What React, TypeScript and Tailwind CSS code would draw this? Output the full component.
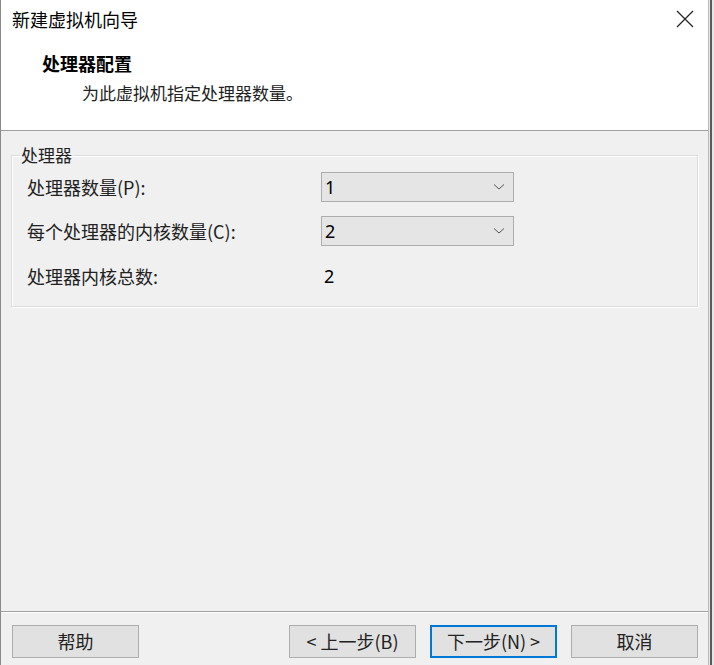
import React from "react";

const font = { fontFamily: '"Noto Sans CJK SC", "Liberation Sans", sans-serif' };

function Chevron() {
  return (
    <svg width="12" height="8" viewBox="0 0 12 8" className="mr-[8px]">
      <path d="M1 1.5 L6 6 L11 1.5" fill="none" stroke="#555" strokeWidth="1" />
    </svg>
  );
}

function Combo({ value }: { value: string }) {
  return (
    <div className="w-[193px] h-[30px] bg-[#e5e5e5] border border-[#adadad] flex items-center justify-between">
      <span className="pl-[3px] text-[18px] text-black" style={{ fontFamily: '"Noto Sans", "Liberation Sans", sans-serif' }}>{value}</span>
      <Chevron />
    </div>
  );
}

function Btn({ label, primary }: { label: string; primary?: boolean }) {
  return (
    <div
      className={
        "w-[127px] h-[33px] bg-[#e1e1e1] flex items-center justify-center text-[18px] text-[#222] " +
        (primary ? "border-2 border-[#0078d7]" : "border border-[#adadad]")
      }
    >
      {label}
    </div>
  );
}

export default function App() {
  return (
    <div className="w-[714px] h-[665px] flex bg-[#f0f0f0] overflow-hidden" style={font}>
      <div className="w-[709px] h-full flex flex-col border-l border-[#8a8a8a] border-r border-r-[#b9b9b9]">
        <div className="h-[131px] bg-white border-b border-[#a0a0a0] flex flex-col">
          <div className="h-[38px] flex items-center justify-between pl-[11px] pr-[14px]">
            <span className="text-[18px] text-black">新建虚拟机向导</span>
            <svg width="18" height="18" viewBox="0 0 18 18">
              <path d="M1 1 L17 17 M17 1 L1 17" stroke="#222" strokeWidth="1.2" />
            </svg>
          </div>
          <div className="pl-[41px] pt-[12px] text-[18px] font-bold text-black leading-[26px]">处理器配置</div>
          <div className="pl-[81px] pt-[5px] text-[17px] text-[#222] leading-[24px]">为此虚拟机指定处理器数量。</div>
        </div>
        <div className="flex-1 flex flex-col">
          <div className="px-[10px] pt-[14px]">
            <fieldset className="border border-[#dcdcdc] shadow-[inset_1px_1px_0_#ffffff,1px_1px_0_#ffffff] h-[162px] pl-[15px] pr-[10px]">
              <legend className="text-[17px] text-[#222] px-[1px] ml-[-7px] leading-[20px]">处理器</legend>
              <div className="flex items-center h-[30px] mt-[7px]">
                <span className="w-[294px] text-[18px] text-[#222]">处理器数量(P):</span>
                <Combo value="1" />
              </div>
              <div className="flex items-center h-[30px] mt-[14px]">
                <span className="w-[294px] text-[18px] text-[#222]">每个处理器的内核数量(C):</span>
                <Combo value="2" />
              </div>
              <div className="flex items-center h-[30px] mt-[15px]">
                <span className="w-[297px] text-[18px] text-[#222]">处理器内核总数:</span>
                <span className="text-[18px] text-black" style={{ fontFamily: '"Noto Sans", "Liberation Sans", sans-serif' }}>2</span>
              </div>
            </fieldset>
          </div>
          <div className="flex-1" />
          <div className="border-t border-[#a0a0a0] shadow-[inset_0_1px_0_#ffffff] h-[54px] flex items-start pt-[13px] pl-[11px] pr-[10px]">
            <Btn label="帮助" />
            <div className="flex-1" />
            <div className="flex gap-[14px]">
              <Btn label="< 上一步(B)" />
              <Btn label="下一步(N) >" primary />
              <Btn label="取消" />
            </div>
          </div>
        </div>
      </div>
      <div className="w-[1px] bg-[#e8e8e8]" />
      <div className="w-[2px] bg-[#5a5a5a]" />
      <div className="flex-1 bg-[#e6e6e6]" />
    </div>
  );
}
